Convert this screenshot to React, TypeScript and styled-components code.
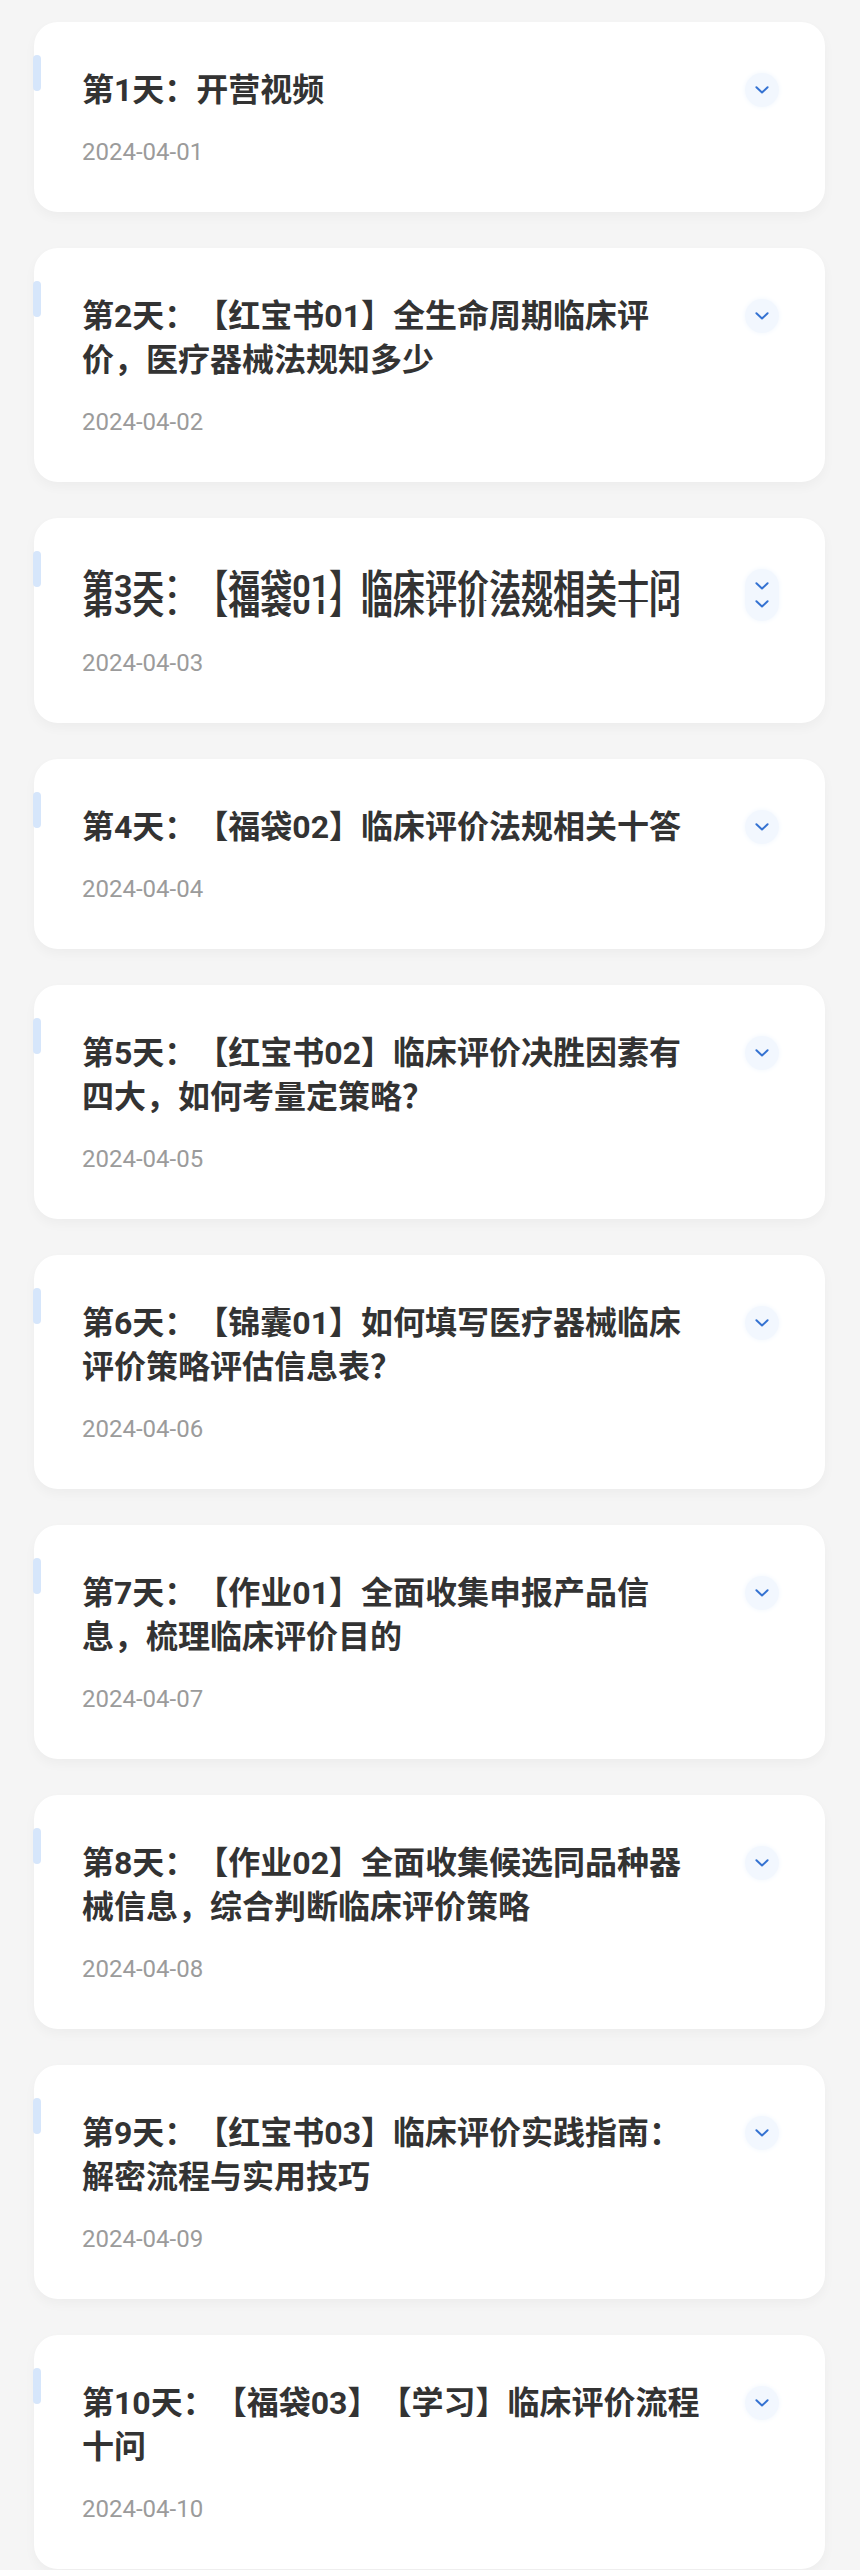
import React from "react";
import styled, { createGlobalStyle } from "styled-components";

type Lesson = {
  title: string;
  date: string;
  glitch?: boolean;
};

const lessons: Lesson[] = [
  { title: "第1天：开营视频", date: "2024-04-01" },
  { title: "第2天：【红宝书01】全生命周期临床评价，医疗器械法规知多少", date: "2024-04-02" },
  { title: "第3天：【福袋01】临床评价法规相关十问", date: "2024-04-03", glitch: true },
  { title: "第4天：【福袋02】临床评价法规相关十答", date: "2024-04-04" },
  { title: "第5天：【红宝书02】临床评价决胜因素有四大，如何考量定策略？", date: "2024-04-05" },
  { title: "第6天：【锦囊01】如何填写医疗器械临床评价策略评估信息表？", date: "2024-04-06" },
  { title: "第7天：【作业01】全面收集申报产品信息，梳理临床评价目的", date: "2024-04-07" },
  { title: "第8天：【作业02】全面收集候选同品种器械信息，综合判断临床评价策略", date: "2024-04-08" },
  { title: "第9天：【红宝书03】临床评价实践指南：解密流程与实用技巧", date: "2024-04-09" },
  { title: "第10天：【福袋03】【学习】临床评价流程十问", date: "2024-04-10" },
];

function Chevron() {
  return (
    <svg width="14" height="8" viewBox="0 0 14 8" fill="none">
      <path
        d="M1.4 1.3 L7 6.5 L12.6 1.3"
        stroke="#3472d2"
        strokeWidth="2"
        strokeLinecap="round"
        strokeLinejoin="round"
      />
    </svg>
  );
}

function LessonCard({ lesson }: { lesson: Lesson }) {
  return (
    <Card>
      <Accent />
      <Header>
        <div>
          <Title>{lesson.title}</Title>
          {lesson.glitch && (
            <GhostStrip aria-hidden>
              <GhostTitle>{lesson.title}</GhostTitle>
            </GhostStrip>
          )}
        </div>
        <Toggle $doubled={!!lesson.glitch}>
          <Chevron />
          {lesson.glitch && <Chevron />}
        </Toggle>
      </Header>
      <DateText>{lesson.date}</DateText>
    </Card>
  );
}

export default function App() {
  return (
    <>
      <GlobalStyle />
      <Page>
        {lessons.map(lesson => (
          <LessonCard key={lesson.date} lesson={lesson} />
        ))}
      </Page>
    </>
  );
}

const GlobalStyle = createGlobalStyle`
  html, body {
    margin: 0;
    padding: 0;
    background: #f5f5f5;
  }
  body {
    font-family: Roboto, "Noto Sans CJK SC", sans-serif;
  }
`;

const Page = styled.div`
  display: flex;
  flex-direction: column;
  gap: 36px;
  padding: 22px 35px 40px 34px;
  min-height: 2570px;
  box-sizing: border-box;
`;

const Card = styled.div`
  position: relative;
  background: #ffffff;
  border-radius: 24px;
  padding: 46px 46px 42px 48px;
  box-shadow: 0 5px 12px rgba(0, 0, 0, 0.035);
`;

const Accent = styled.div`
  position: absolute;
  left: -1px;
  top: 33px;
  width: 8px;
  height: 36px;
  border-radius: 4px;
  background: #d6e6fb;
`;

const Header = styled.div`
  display: grid;
  grid-template-columns: 1fr 34px;
  column-gap: 41px;
  align-items: start;
`;

const Title = styled.h3`
  margin: 0;
  font-family: Roboto, "Noto Sans CJK SC", sans-serif;
  font-size: 32px;
  line-height: 44px;
  font-weight: 700;
  color: #333333;
  text-spacing-trim: space-all;
`;

const GhostStrip = styled.div`
  position: relative;
  height: 18px;
  margin: -8px 0 5px;
  overflow: hidden;
  background: #ffffff;
`;

const GhostTitle = styled(Title)`
  margin-top: -19px;
  white-space: nowrap;
`;

const Toggle = styled.div<{ $doubled: boolean }>`
  margin-top: 5px;
  width: 34px;
  height: ${p => (p.$doubled ? 52 : 34)}px;
  border-radius: 17px;
  background: #f2f7fe;
  box-shadow: 0 0 4px 1px #f5f9fe;
  display: flex;
  flex-direction: column;
  align-items: center;
  gap: 10px;
  padding-top: 13px;
  box-sizing: border-box;

  svg {
    display: block;
    flex-shrink: 0;
  }
`;

const DateText = styled.div`
  margin-top: 22px;
  font-family: Roboto, "Noto Sans CJK SC", sans-serif;
  font-size: 24px;
  line-height: 36px;
  color: #9b9b9b;
`;
